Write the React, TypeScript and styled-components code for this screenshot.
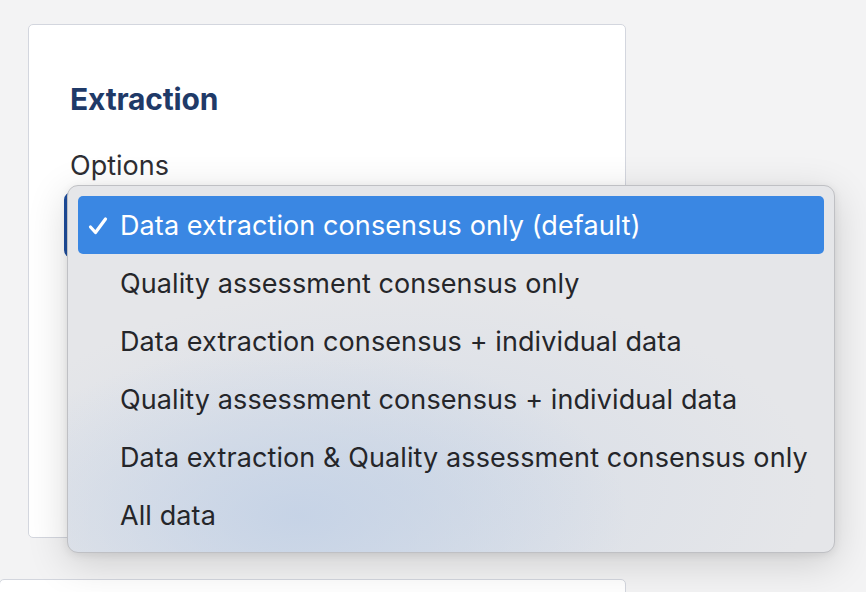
import styled, { createGlobalStyle } from "styled-components";

const GlobalStyle = createGlobalStyle`
  html, body {
    margin: 0;
    padding: 0;
    background: #f3f3f4;
    font-family: Inter, "Noto Sans", sans-serif;
    overflow: hidden;
  }
`;

const options = [
  "Data extraction consensus only (default)",
  "Quality assessment consensus only",
  "Data extraction consensus + individual data",
  "Quality assessment consensus + individual data",
  "Data extraction & Quality assessment consensus only",
  "All data",
];

const Page = styled.div`
  position: relative;
  width: 866px;
  height: 592px;
  padding: 24px 0 0 28px;
  box-sizing: border-box;
  display: flex;
  flex-direction: column;
  gap: 41px;
`;

const Card = styled.section`
  flex-shrink: 0;
  width: 598px;
  height: 514px;
  box-sizing: border-box;
  background: #ffffff;
  border: 1px solid #d3d6de;
  border-radius: 5px;
  padding: 55px 0 0 41px;
`;

const NextCard = styled.section`
  flex-shrink: 0;
  width: 627px;
  height: 40px;
  margin-left: -29px;
  box-sizing: border-box;
  background: #ffffff;
  border: 1px solid #d3d6de;
  border-radius: 5px;
`;

const Heading = styled.h2`
  margin: 0;
  font-size: 30px;
  line-height: 38px;
  font-weight: 700;
  color: #1f3a68;
  letter-spacing: -0.2px;
`;

const Label = styled.div`
  margin-top: 31px;
  font-size: 27px;
  line-height: 34px;
  color: #2e2e33;
`;

const SelectBox = styled.div`
  margin-top: 9px;
  margin-left: -6px;
  width: 540px;
  height: 66px;
  box-sizing: border-box;
  border: 3px solid #1f4fa0;
  border-radius: 8px;
  background: #ffffff;
`;

const Menu = styled.ul`
  position: absolute;
  left: 67px;
  top: 185px;
  width: 768px;
  height: 368px;
  box-sizing: border-box;
  margin: 0;
  padding: 10px 10px 8px;
  list-style: none;
  border: 1px solid #bfc0c4;
  border-radius: 11px;
  background:
    radial-gradient(ellipse 330px 170px at 230px 330px, rgba(196, 210, 230, 0.9), rgba(196, 210, 230, 0) 100%),
    radial-gradient(ellipse 420px 200px at 330px 300px, rgba(205, 215, 230, 0.6), rgba(205, 215, 230, 0) 100%),
    #e5e6e9;
  box-shadow: 0 10px 40px rgba(0, 0, 0, 0.16), 0 2px 8px rgba(0, 0, 0, 0.08);
`;

const Item = styled.li<{ $selected?: boolean }>`
  position: relative;
  height: 58px;
  display: flex;
  align-items: center;
  padding-left: 42px;
  border-radius: 5px;
  font-size: 27px;
  letter-spacing: 0.1px;
  color: ${(p) => (p.$selected ? "#ffffff" : "#25262a")};
  background: ${(p) => (p.$selected ? "#3a87e3" : "transparent")};
  white-space: nowrap;
`;

const Check = styled.svg`
  position: absolute;
  left: 10px;
  top: 20px;
`;

export default function App() {
  return (
    <>
      <GlobalStyle />
      <Page>
        <Card>
          <Heading>Extraction</Heading>
          <Label>Options</Label>
          <SelectBox />
        </Card>
        <NextCard />
        <Menu>
          {options.map((o, i) => (
            <Item key={o} $selected={i === 0}>
              {i === 0 && (
                <Check width="20" height="20" viewBox="0 0 20 20">
                  <path
                    d="M2.5 11 L7.5 16.5 L17.5 3"
                    fill="none"
                    stroke="#ffffff"
                    strokeWidth="3.2"
                    strokeLinecap="round"
                    strokeLinejoin="round"
                  />
                </Check>
              )}
              {o}
            </Item>
          ))}
        </Menu>
      </Page>
    </>
  );
}
